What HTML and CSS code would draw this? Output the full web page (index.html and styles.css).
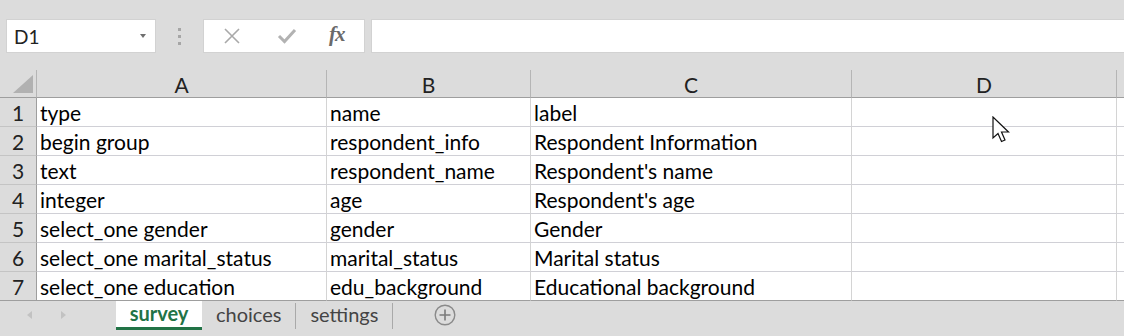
FILE: index.html
```html
<!DOCTYPE html>
<html lang="en">
<head>
  <meta charset="UTF-8">
  <meta name="viewport" content="width=device-width, initial-scale=1.0">
  <title>survey.xlsx</title>
  <link rel="stylesheet" href="styles.css">
</head>
<body>

  <div class="window">
    <div class="top-strip"></div>

    <!-- Name box and formula bar -->
    <div class="toolbar">
      <div class="name-box">
        <span>D1</span>
        <span class="drop-arrow"></span>
      </div>
      <div class="grip">
        <span></span><span></span><span></span>
      </div>
      <div class="fx-buttons">
        <svg class="fx-icon" width="18" height="16" viewBox="0 0 18 16">
          <path d="M2 1 L16 15 M16 1 L2 15" stroke="#a9a9a9" stroke-width="1.6" fill="none"/>
        </svg>
        <svg class="fx-icon" width="20" height="16" viewBox="0 0 20 16">
          <path d="M2 8 L7.5 13.5 L18 2" stroke="#b2b2b2" stroke-width="3" fill="none"/>
        </svg>
        <span class="fx-label">fx</span>
      </div>
      <div class="formula-input"></div>
    </div>

    <!-- Sheet grid -->
    <div class="sheet">
      <div class="corner"><span class="corner-mark"></span></div>
      <div class="col-head">A</div>
      <div class="col-head">B</div>
      <div class="col-head">C</div>
      <div class="col-head">D</div>
      <div class="col-head last"></div>

      <div class="row-head">1</div>
      <div class="cell">type</div>
      <div class="cell">name</div>
      <div class="cell">label</div>
      <div class="cell"></div>
      <div class="cell last"></div>

      <div class="row-head">2</div>
      <div class="cell">begin group</div>
      <div class="cell">respondent_info</div>
      <div class="cell">Respondent Information</div>
      <div class="cell"></div>
      <div class="cell last"></div>

      <div class="row-head">3</div>
      <div class="cell">text</div>
      <div class="cell">respondent_name</div>
      <div class="cell">Respondent's name</div>
      <div class="cell"></div>
      <div class="cell last"></div>

      <div class="row-head">4</div>
      <div class="cell">integer</div>
      <div class="cell">age</div>
      <div class="cell">Respondent's age</div>
      <div class="cell"></div>
      <div class="cell last"></div>

      <div class="row-head">5</div>
      <div class="cell">select_one gender</div>
      <div class="cell">gender</div>
      <div class="cell">Gender</div>
      <div class="cell"></div>
      <div class="cell last"></div>

      <div class="row-head">6</div>
      <div class="cell">select_one marital_status</div>
      <div class="cell">marital_status</div>
      <div class="cell">Marital status</div>
      <div class="cell"></div>
      <div class="cell last"></div>

      <div class="row-head">7</div>
      <div class="cell">select_one education</div>
      <div class="cell">edu_background</div>
      <div class="cell">Educational background</div>
      <div class="cell"></div>
      <div class="cell last"></div>
    </div>

    <!-- Sheet tabs -->
    <div class="tab-bar">
      <div class="tab-nav">
        <span class="nav-arrow nav-left"></span>
        <span class="nav-arrow nav-right"></span>
      </div>
      <div class="tab active">survey</div>
      <div class="tab">choices</div>
      <div class="tab">settings</div>
      <div class="add-sheet">
        <svg width="22" height="22" viewBox="0 0 22 22">
          <circle cx="11" cy="11" r="9.8" stroke="#8a8a8a" stroke-width="1.4" fill="none"/>
          <path d="M11 5.5 V16.5 M5.5 11 H16.5" stroke="#7a7a7a" stroke-width="1.6"/>
        </svg>
      </div>
    </div>

    <!-- Mouse pointer over D2 -->
    <svg class="pointer" width="20" height="28" viewBox="0 0 20 28">
      <path d="M1 1 L1 22 L6 17.5 L9.5 25.5 L13 24 L9.5 16 L16.5 16 Z" fill="#fff" stroke="#111" stroke-width="1.2" stroke-linejoin="miter"/>
    </svg>
  </div>

</body>
</html>
```

FILE: styles.css
```css
body {
  margin: 0;
  padding: 0;
  font-family: Lato, "Open Sans", sans-serif;
  background-color: #dcdcdc;
}

.window {
  position: relative;
  width: 1124px;
  height: 336px;
  overflow: hidden;
  background-color: #dcdcdc;
}

.top-strip {
  height: 19px;
}

/* Formula bar */
.toolbar {
  display: flex;
  align-items: stretch;
  height: 34px;
  padding-left: 6px;
}

.name-box {
  display: flex;
  align-items: center;
  justify-content: space-between;
  box-sizing: border-box;
  width: 150px;
  padding: 0 9px 0 7px;
  background-color: #fff;
  border: 1px solid #d2d2d2;
  font-size: 19px;
  color: #222;
}

.drop-arrow {
  width: 0;
  height: 0;
  border-left: 3.5px solid transparent;
  border-right: 3.5px solid transparent;
  border-top: 4px solid #6f6f6f;
}

.grip {
  display: flex;
  flex-direction: column;
  justify-content: center;
  gap: 4px;
  width: 47px;
  align-items: center;
}

.grip span {
  width: 3px;
  height: 3px;
  background-color: #a6a6a6;
}

.fx-buttons {
  display: flex;
  align-items: center;
  box-sizing: border-box;
  width: 162px;
  padding-left: 19px;
  background-color: #fff;
  border: 1px solid #d2d2d2;
}

.fx-icon:first-child {
  margin-right: 36px;
}

.fx-icon:nth-child(2) {
  margin-right: 32px;
}

.fx-label {
  font-family: "Liberation Serif", serif;
  font-style: italic;
  font-weight: bold;
  font-size: 21px;
  color: #6a6a6a;
  letter-spacing: -1px;
  margin-top: -3px;
}

.formula-input {
  flex: 1;
  margin-left: 6px;
  margin-right: -2px;
  background-color: #fff;
  border: 1px solid #d2d2d2;
}

/* Grid */
.sheet {
  display: grid;
  grid-template-columns: 37px 290px 204px 321px 265px 1fr;
  grid-template-rows: 28px repeat(7, 29px);
  margin-top: 17px;
}

.corner,
.col-head,
.row-head {
  box-sizing: border-box;
  background-color: #dcdcdc;
  color: #222;
  font-size: 21px;
}

.corner {
  position: relative;
  border-right: 1px solid #b5b5b5;
  border-bottom: 1px solid #9e9e9e;
}

.corner-mark {
  position: absolute;
  right: 3px;
  bottom: 4px;
  width: 0;
  height: 0;
  border-left: 20px solid transparent;
  border-bottom: 18px solid #b1b1b1;
}

.col-head {
  display: flex;
  justify-content: center;
  align-items: flex-end;
  padding-bottom: 0;
  border-right: 1px solid #b5b5b5;
  border-bottom: 1px solid #9e9e9e;
}

.col-head.last {
  border-right: none;
}

.row-head {
  display: flex;
  justify-content: center;
  align-items: flex-end;
  padding-bottom: 1px;
  border-right: 1px solid #9e9e9e;
  border-bottom: 1px solid #c4c4c4;
}

.row-head:nth-last-child(6) {
  border-bottom-color: #9e9e9e;
}

.cell {
  display: flex;
  align-items: flex-end;
  box-sizing: border-box;
  padding: 0 0 1px 3px;
  background-color: #fff;
  border-right: 1px solid #d4d4d4;
  border-bottom: 1px solid #d0d0d6;
  font-size: 21px;
  line-height: 25px;
  color: #000;
  white-space: nowrap;
  overflow: hidden;
}

.cell.last {
  border-right: none;
}

.sheet .cell:nth-last-child(-n+5) {
  border-bottom-color: #9e9e9e;
}

/* Sheet tabs */
.tab-bar {
  display: flex;
  align-items: flex-start;
  height: 35px;
}

.tab-nav {
  display: flex;
  align-items: center;
  width: 116px;
  height: 28px;
}

.nav-arrow {
  width: 0;
  height: 0;
  border-top: 4.5px solid transparent;
  border-bottom: 4.5px solid transparent;
}

.nav-left {
  margin-left: 27px;
  border-right: 5px solid #c2c2c2;
}

.nav-right {
  margin-left: 29px;
  border-left: 5px solid #c2c2c2;
}

.tab {
  box-sizing: border-box;
  height: 26px;
  padding: 0 14px;
  margin-top: 2px;
  font-size: 20px;
  line-height: 23px;
  color: #444;
  border-right: 1px solid #a9a9a9;
}

.tab.active {
  margin-top: 0;
  height: 29px;
  width: 86px;
  text-align: center;
  padding: 0;
  background-color: #fff;
  color: #217346;
  font-weight: bold;
  line-height: 25px;
  border-right: none;
  border-bottom: 3px solid #217346;
}

.add-sheet {
  margin-left: 41px;
  margin-top: 3px;
}

.pointer {
  position: absolute;
  left: 992px;
  top: 116px;
}
```
